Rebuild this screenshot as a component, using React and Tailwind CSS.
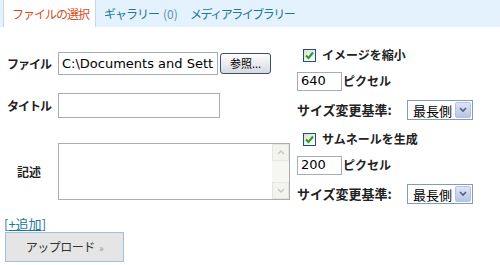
import React from 'react';

const jp = { fontFamily: '"Noto Sans CJK JP", "Noto Sans", sans-serif' };
const latin = { fontFamily: '"DejaVu Sans", "Noto Sans CJK JP", sans-serif' };

function CheckBox() {
  return (
    <span className="inline-flex w-[13px] h-[13px] border border-[#1c5180] bg-gradient-to-br from-[#dcdcd7] to-white items-center justify-center">
      <svg width="9" height="9" viewBox="0 0 9 9">
        <path d="M1 4.5 L3.5 7 L8 1.5" fill="none" stroke="#21a121" strokeWidth="2" />
      </svg>
    </span>
  );
}

function FakeSelect() {
  return (
    <div className="flex items-center w-[66px] h-[20px] border border-[#7f9db9] bg-white">
      <span className="flex-1 pl-[5px] text-[13px] leading-none text-black" style={jp}>最長側</span>
      <span className="w-[16px] h-[16px] mr-[1px] flex items-center justify-center bg-gradient-to-b from-[#dfe4f5] to-[#b9c4e6] border border-[#b7c2e3] rounded-[2px]">
        <svg width="8" height="6" viewBox="0 0 8 6">
          <path d="M1 1 L4 4 L7 1" fill="none" stroke="#4d6185" strokeWidth="1.6" />
        </svg>
      </span>
    </div>
  );
}

function ResizeGroup({ title, size }) {
  return (
    <>
      <div className="h-[26px] flex items-center pl-[6px] gap-[6px]">
        <CheckBox />
        <span className="text-[12px] font-bold text-[#222]">{title}</span>
      </div>
      <div className="h-[26px] flex items-center">
        <div className="w-[45px] h-[19px] border border-[#a5acb2] bg-white flex items-center pl-[3px] text-[13px] text-black" style={latin}>{size}</div>
        <span className="ml-[1px] text-[12px] font-bold text-[#222]">ピクセル</span>
      </div>
      <div className="h-[32px] flex items-center">
        <span className="w-[110px] text-[13px] font-bold text-[#222]">サイズ変更基準:</span>
        <FakeSelect />
      </div>
    </>
  );
}

export default function App() {
  return (
    <div className="w-[500px] h-[265px] bg-white overflow-hidden text-[#333]" style={jp}>
      {/* tabs */}
      <div className="h-[27px] bg-[#e4f2fd] flex items-stretch pl-[3px] text-[12px]">
        <div className="w-[93px] bg-white border-l border-r border-[#c6d9e9] flex items-center pl-[8px] text-[#d54e21] tracking-[-1px]">ファイルの選択</div>
        <div className="w-[87px] flex items-center pl-[8px] text-[#21759b]">
          <span className="tracking-[-1px]">ギャラリー</span>
          <span className="ml-[4px] text-[#5a8fb0]">(0)</span>
        </div>
        <div className="flex items-center pl-[7px] text-[#21759b] tracking-[-1.5px]">メディアライブラリー</div>
      </div>

      <div className="flex">
        {/* left form */}
        <div className="w-[297px] flex flex-col">
          <div className="mt-[25px] h-[23px] flex items-center">
            <span className="w-[58px] text-center text-[12px] font-bold text-[#222] tracking-[-1px]">ファイル</span>
            <div className="w-[160px] h-[23px] border border-[#a5acb2] bg-white flex items-center pl-[3px] overflow-hidden whitespace-nowrap text-[13px] text-black" style={latin}>
              C:\Documents and Sett
            </div>
            <button className="ml-[2px] w-[51px] h-[21px] rounded-[3px] border border-[#3c4f6e] bg-gradient-to-b from-white to-[#d8d8e2] text-[11px] text-black">参照...</button>
          </div>
          <div className="mt-[18px] h-[25px] flex items-center">
            <span className="w-[58px] text-center text-[12px] font-bold text-[#222] tracking-[-1px]">タイトル</span>
            <div className="w-[162px] h-[25px] border border-[#a5acb2] bg-white" />
          </div>
          <div className="mt-[25px] h-[57px] flex items-center">
            <span className="w-[58px] text-center text-[12px] font-bold text-[#222]">記述</span>
            <div className="w-[232px] h-[57px] border border-[#a5acb2] bg-white flex justify-end">
              <div className="w-[17px] h-full bg-[#f6f6f2] flex flex-col justify-between">
                <div className="h-[17px] border border-[#e6e6e0] bg-[#f3f3ef] flex items-center justify-center">
                  <svg width="8" height="5" viewBox="0 0 8 5"><path d="M1 4 L4 1 L7 4" fill="none" stroke="#c6c6c0" strokeWidth="1.4" /></svg>
                </div>
                <div className="h-[17px] border border-[#e6e6e0] bg-[#f3f3ef] flex items-center justify-center">
                  <svg width="8" height="5" viewBox="0 0 8 5"><path d="M1 1 L4 4 L7 1" fill="none" stroke="#c6c6c0" strokeWidth="1.4" /></svg>
                </div>
              </div>
            </div>
          </div>
          <div className="mt-[14px] h-[18px] pl-[4px] flex items-center text-[13px] text-[#21759b] leading-none">
            [<a href="#" className="underline">+追加</a>]
          </div>
          <button className="ml-[5px] w-[119px] h-[30px] bg-[#e5e5e5] border border-[#9dc1dc] text-[12px] text-[#333] tracking-[-0.5px]">
            アップロード <span className="ml-[2px] text-[#999] text-[10px]">»</span>
          </button>
        </div>

        {/* right options */}
        <div className="flex flex-col pt-[15px]">
          <ResizeGroup title="イメージを縮小" size="640" />
          <ResizeGroup title="サムネールを生成" size="200" />
        </div>
      </div>
    </div>
  );
}
